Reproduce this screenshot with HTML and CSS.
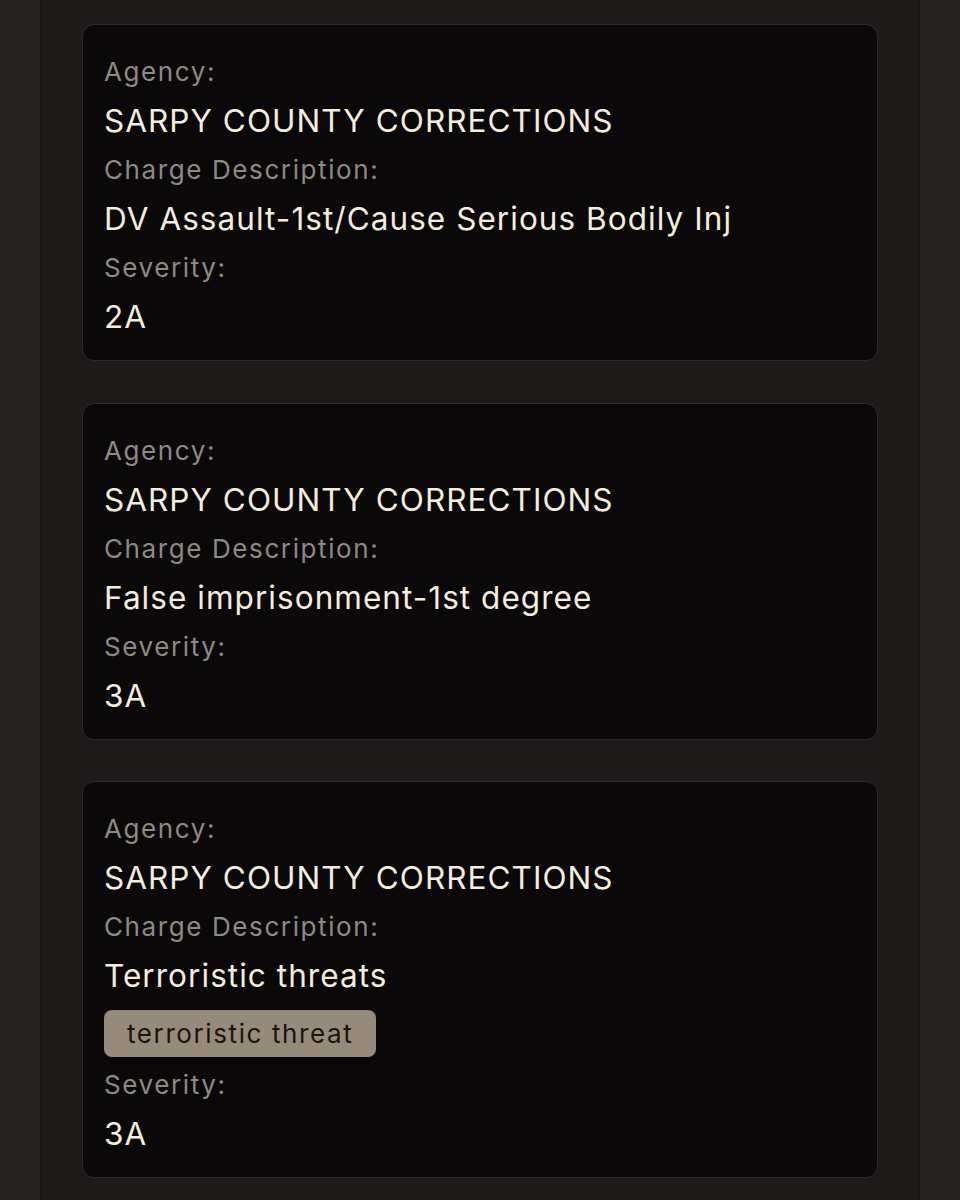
FILE: index.html
```html
<!DOCTYPE html>
<html lang="en">

<head>
    <meta charset="UTF-8">
    <meta name="viewport" content="width=device-width, initial-scale=1.0">
    <title>Charges</title>
    <link rel="stylesheet" href="styles.css">
</head>

<body>

    <div class="panel">

        <div class="charge-card">
            <div class="field-label">Agency:</div>
            <div class="field-value">SARPY COUNTY CORRECTIONS</div>
            <div class="field-label">Charge Description:</div>
            <div class="field-value">DV Assault-1st/Cause Serious Bodily Inj</div>
            <div class="field-label">Severity:</div>
            <div class="field-value">2A</div>
        </div>

        <div class="charge-card">
            <div class="field-label">Agency:</div>
            <div class="field-value">SARPY COUNTY CORRECTIONS</div>
            <div class="field-label">Charge Description:</div>
            <div class="field-value">False imprisonment-1st degree</div>
            <div class="field-label">Severity:</div>
            <div class="field-value">3A</div>
        </div>

        <div class="charge-card">
            <div class="field-label">Agency:</div>
            <div class="field-value">SARPY COUNTY CORRECTIONS</div>
            <div class="field-label">Charge Description:</div>
            <div class="field-value">Terroristic threats</div>
            <div class="tag-list">
                <span class="tag">terroristic threat</span>
            </div>
            <div class="field-label">Severity:</div>
            <div class="field-value">3A</div>
        </div>

    </div>

</body>

</html>
```

FILE: styles.css
```css
html,
body {
    margin: 0;
    height: 100%;
}

body {
    background: #272321;
    font-family: Inter, "Liberation Sans", sans-serif;
    padding: 0 40px;
}

.panel {
    background: #1c1b1a;
    border-left: 2px solid #171615;
    border-right: 2px solid #171615;
    min-height: 100%;
    padding: 24px 40px 0;
    display: flex;
    flex-direction: column;
    gap: 41.5px;
    box-sizing: border-box;
}

.charge-card {
    background: #0a0809;
    border: 1px solid #2c2a29;
    border-radius: 12px;
    padding: 25px 21px 16px;
}

.field-label {
    color: #8e8983;
    font-size: 26px;
    letter-spacing: 1.6px;
    line-height: 44px;
}

.field-value {
    color: #f4eddd;
    font-size: 31.5px;
    letter-spacing: 1.05px;
    line-height: 54px;
}

.tag-list {
    margin: 7px 0 6px;
}

.tag {
    display: inline-block;
    background: #968b7b;
    color: #1a1411;
    font-size: 26px;
    letter-spacing: 1.6px;
    line-height: 47px;
    padding: 0 23px;
    border-radius: 8px;
}
```
